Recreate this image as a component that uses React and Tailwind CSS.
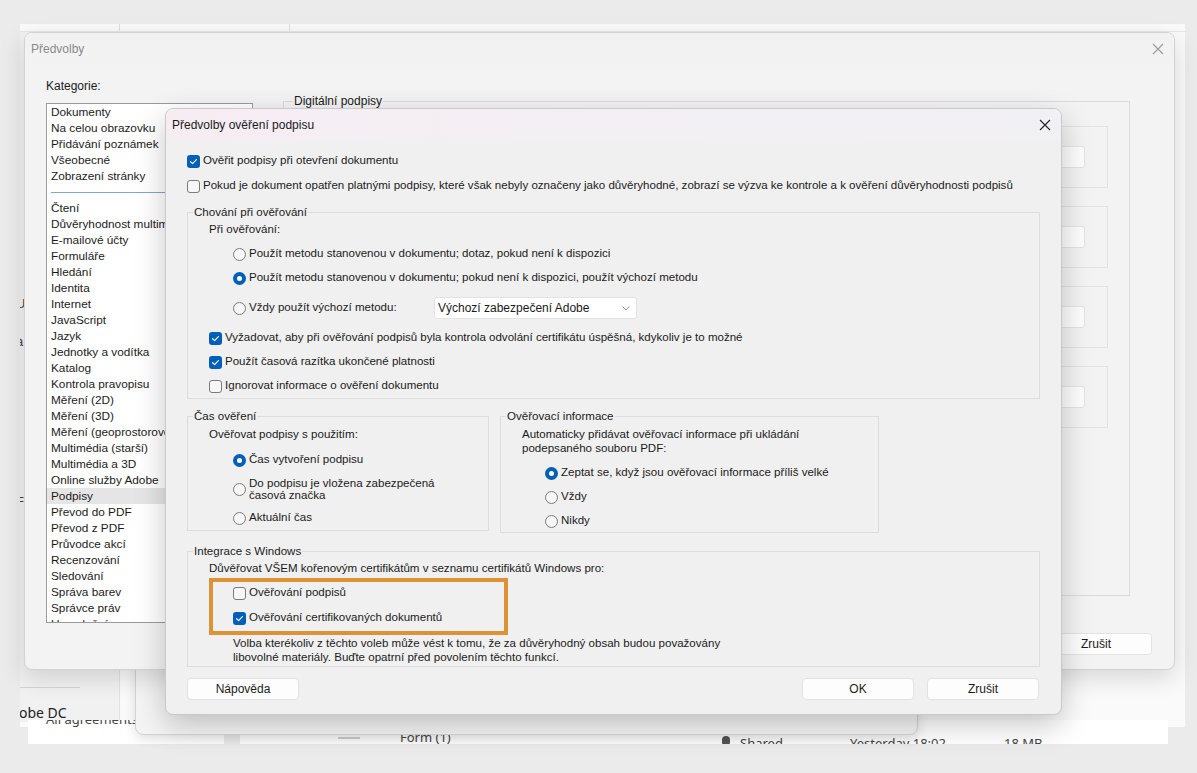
import React from "react";

const F = "font-['Liberation_Sans',Arial,sans-serif]";

function Check({ checked }) {
  return checked ? (
    <span className="w-[13px] h-[13px] rounded-[3px] bg-[#005fb8] flex items-center justify-center shrink-0">
      <svg width="9" height="9" viewBox="0 0 9 9">
        <path d="M1.6 4.7 L3.6 6.6 L7.4 2.6" fill="none" stroke="white" strokeWidth="1.2" strokeLinecap="round" strokeLinejoin="round" />
      </svg>
    </span>
  ) : (
    <span className="w-[13px] h-[13px] rounded-[3px] border border-[#7a7a7a] bg-[#f7f7f7] shrink-0" />
  );
}

function Radio({ checked }) {
  return checked ? (
    <span className="w-[13px] h-[13px] rounded-full bg-[#005fb8] flex items-center justify-center shrink-0">
      <span className="w-[5px] h-[5px] rounded-full bg-white" />
    </span>
  ) : (
    <span className="w-[13px] h-[13px] rounded-full border border-[#7a7a7a] bg-[#f7f7f7] shrink-0" />
  );
}

function CRow({ checked, children, className = "" }) {
  return (
    <div className={"h-[20px] flex items-center gap-[3px] " + className}>
      <Check checked={checked} />
      <span>{children}</span>
    </div>
  );
}

function RRow({ checked, children, className = "" }) {
  return (
    <div className={"h-[20px] flex items-center gap-[3px] " + className}>
      <Radio checked={checked} />
      <span>{children}</span>
    </div>
  );
}

function Group({ title, className = "", children }) {
  return (
    <div className={"relative border border-[#dcdcdc] " + className}>
      <span className="absolute -top-[8px] left-[5px] px-[1px] bg-[#f0f0f0] leading-[14px]">{title}</span>
      {children}
    </div>
  );
}

function Btn({ children, className = "" }) {
  return (
    <div className={"w-[112px] h-[22px] rounded-[4px] bg-[#fdfdfd] border border-[#e2e2e2] flex items-center justify-center " + className}>
      {children}
    </div>
  );
}

const categoriesTop = ["Dokumenty", "Na celou obrazovku", "Přidávání poznámek", "Všeobecné", "Zobrazení stránky"];
const categories = [
  "Čtení", "Důvěryhodnost multimédií", "E-mailové účty", "Formuláře", "Hledání", "Identita", "Internet",
  "JavaScript", "Jazyk", "Jednotky a vodítka", "Katalog", "Kontrola pravopisu", "Měření (2D)", "Měření (3D)",
  "Měření (geoprostorové)", "Multimédia (starší)", "Multimédia a 3D", "Online služby Adobe", "Podpisy",
  "Převod do PDF", "Převod z PDF", "Průvodce akcí", "Recenzování", "Sledování", "Správa barev", "Správce práv",
  "Usnadnění",
];

function XIcon({ color, size = 12 }) {
  return (
    <svg width={size} height={size} viewBox="0 0 12 12">
      <path d="M1 1 L11 11 M11 1 L1 11" stroke={color} strokeWidth="1.1" />
    </svg>
  );
}

export default function App() {
  return (
    <div className={"relative w-[1197px] h-[773px] overflow-hidden bg-[#ebebeb] text-[12px] text-[#1b1b1b] " + F}>
      {/* background app window */}
      <div className="absolute left-[20px] top-[24px] w-[1165px] h-[703px] bg-[#fafafa] overflow-hidden">
        <div className="h-[8px] flex border-b border-[#e6e6e6]">
          <div className="w-[100px] border-r border-[#e0e0e0]" />
          <div className="w-[170px] border-r border-[#e0e0e0]" />
        </div>
        <div className="absolute left-0 top-[8px] w-[100px] h-[690px] bg-[#f1f1f1] border-r border-[#e2e2e2]">
          <div className="absolute left-[-3px] top-[140px] text-[13px] text-[#444]">I</div>
          <div className="absolute left-[-4px] top-[262px] text-[13px] text-[#444]">U</div>
          <div className="absolute left-[-4px] top-[300px] text-[13px] text-[#444]">à</div>
          <div className="absolute left-[-4px] top-[460px] text-[13px] text-[#444]">F</div>
          <div className="absolute left-0 top-[655px] w-[60px] border-t border-[#d4d4d4]" />
          <div className="absolute left-[-1px] top-[673px] text-[14px] text-[#222] font-['Noto_Sans',sans-serif] leading-[16px]">obe DC</div>
        </div>
      </div>
      {/* bottom file row of app */}
      <div className="absolute left-[28px] top-[720px] w-[1140px] h-[24px] bg-white overflow-hidden text-[13px] text-[#444] font-['Noto_Sans',sans-serif]">
        <div className="absolute left-[18px] -top-[10px]">All agreements</div>
        <div className="absolute left-[196px] top-0 w-[16px] h-[25px] bg-[#ececec]" />
        <div className="absolute left-[310px] top-[12px] w-[22px] h-[2px] bg-[#d0d0d0]" />
        <div className="absolute left-[310px] top-[17px] w-[22px] h-[2px] bg-[#d0d0d0]" />
        <div className="absolute left-[372px] top-[8px]">Form (1)</div>
        <div className="absolute left-[694px] top-[16px] w-[8px] h-[10px] rounded-full bg-[#555]" />
        <div className="absolute left-[712px] top-[14px]">Shared</div>
        <div className="absolute left-[822px] top-[14px]">Yesterday 18:02</div>
        <div className="absolute left-[976px] top-[14px]">18 MB</div>
      </div>

      {/* ghost window behind dialog */}
      <div className="absolute left-[135px] top-[600px] w-[783px] h-[135px] rounded-b-[8px] bg-[#f4f4f4] border border-[#d3d3d3] shadow-[0_4px_12px_rgba(0,0,0,0.12)]" />

      {/* Předvolby window */}
      <div className="absolute left-[24px] top-[32px] w-[1151px] h-[638px] rounded-[8px] bg-[#f3f3f3] border border-[#d2d2d2] shadow-[0_8px_24px_rgba(0,0,0,0.14)] overflow-hidden flex flex-col">
        <div className="h-[32px] shrink-0 flex items-center justify-between pl-[6px] pr-[10px] bg-gradient-to-b from-[#f1f1f1] to-[#f3f3f3]">
          <span className="text-[#8a8a8a]">Předvolby</span>
          <XIcon color="#9a9a9a" />
        </div>
        <div className="flex-1 flex pl-[21px] pr-[44px]">
          <div className="w-[207px] flex flex-col">
            <div className="h-[16px] mt-[13px] flex items-center">Kategorie:</div>
            <div className="mt-[9px] h-[520px] border border-[#9a9a9a] bg-white overflow-hidden text-[11.8px]">
              {categoriesTop.map((c) => (
                <div key={c} className="h-[16px] leading-[16px] pl-[4px] whitespace-nowrap">{c}</div>
              ))}
              <div className="h-[16px] flex items-center pl-[4px]">
                <div className="w-full h-[1px] bg-[#7fa7c9]" />
              </div>
              {categories.map((c) => (
                <div key={c} className={"h-[16px] leading-[16px] pl-[4px] whitespace-nowrap " + (c === "Podpisy" ? "bg-[#e5e5e5]" : "")}>{c}</div>
              ))}
            </div>
          </div>
          <div className="flex-1 ml-[30px] flex flex-col">
            <div className="relative mt-[36px] h-[495px] border border-[#dcdcdc]">
              <span className="absolute -top-[8px] left-[9px] px-[1px] bg-[#f3f3f3] leading-[14px]">Digitální podpisy</span>
              {[0, 1, 2, 3].map((i) => (
                <div key={i} className={"ml-[20px] mr-[21px] h-[62px] border border-[#e2e2e2] flex items-center justify-end pr-[22px] " + (i === 0 ? "mt-[24px]" : "mt-[18px]")}>
                  <div className="w-[110px] h-[22px] rounded-[3px] bg-[#fdfdfd] border border-[#e4e4e4]" />
                </div>
              ))}
            </div>
            <div className="flex justify-end mt-[37px] mr-[-22px]">
              <Btn>Zrušit</Btn>
            </div>
          </div>
        </div>
      </div>

      {/* Dialog */}
      <div className="absolute left-[165px] top-[108px] w-[897px] h-[607px] rounded-[8px] bg-[#f0f0f0] border border-[#c9c9c9] shadow-[0_10px_30px_rgba(0,0,0,0.22)] overflow-hidden flex flex-col text-[11.55px]">
        <div className="h-[32px] shrink-0 flex items-center justify-between pl-[6px] pr-[10px] bg-gradient-to-r from-[#f6edf3] via-[#f3eff4] to-[#f1f0f4] text-[12px]">
          <span>Předvolby ověření podpisu</span>
          <XIcon color="#222" />
        </div>
        <div className="flex flex-col pl-[21px]">
          <CRow checked className="mt-[10px]">Ověřit podpisy při otevření dokumentu</CRow>
          <CRow className="mt-[5px]">Pokud je dokument opatřen platnými podpisy, které však nebyly označeny jako důvěryhodné, zobrazí se výzva ke kontrole a k ověření důvěryhodnosti podpisů</CRow>

          <Group title="Chování při ověřování" className="mt-[16px] w-[853px] h-[187px]">
            <div className="pl-[21px] flex flex-col">
              <div className="h-[16px] mt-[9px] flex items-center">Při ověřování:</div>
              <RRow className="mt-[6px] ml-[24px]">Použít metodu stanovenou v dokumentu; dotaz, pokud není k dispozici</RRow>
              <RRow checked className="mt-[4px] ml-[24px]">Použít metodu stanovenou v dokumentu; pokud není k dispozici, použít výchozí metodu</RRow>
              <div className="mt-[9px] ml-[24px] h-[22px] flex items-center">
                <div className="w-[201px] flex items-center gap-[3px]">
                  <Radio />
                  <span>Vždy použít výchozí metodu:</span>
                </div>
                <div className="w-[203px] h-[22px] rounded-[3px] bg-white border border-[#e3e3e3] flex items-center justify-between pl-[3px] pr-[6px]">
                  <span className="text-[12px]">Výchozí zabezpečení Adobe</span>
                  <svg width="8" height="5" viewBox="0 0 8 5"><path d="M0.5 0.5 L4 4 L7.5 0.5" fill="none" stroke="#888" strokeWidth="0.9" /></svg>
                </div>
              </div>
              <CRow checked className="mt-[9px]">Vyžadovat, aby při ověřování podpisů byla kontrola odvolání certifikátu úspěšná, kdykoliv je to možné</CRow>
              <CRow checked className="mt-[4px]">Použít časová razítka ukončené platnosti</CRow>
              <CRow className="mt-[4px]">Ignorovat informace o ověření dokumentu</CRow>
            </div>
          </Group>

          <div className="mt-[17px] flex gap-[11px]">
            <Group title="Čas ověření" className="w-[302px] h-[115px]">
              <div className="pl-[21px] flex flex-col">
                <div className="h-[16px] mt-[10px] flex items-center">Ověřovat podpisy s použitím:</div>
                <RRow checked className="mt-[7px] ml-[24px]">Čas vytvoření podpisu</RRow>
                <div className="mt-[6px] ml-[24px] h-[26px] flex items-center gap-[3px]">
                  <Radio />
                  <span className="leading-[12px]">Do podpisu je vložena zabezpečená<br />časová značka</span>
                </div>
                <RRow className="mt-[6px] ml-[24px]">Aktuální čas</RRow>
              </div>
            </Group>
            <Group title="Ověřovací informace" className="w-[379px] h-[117px]">
              <div className="pl-[21px] flex flex-col">
                <div className="mt-[10px] leading-[14px]">Automaticky přidávat ověřovací informace při ukládání<br />podepsaného souboru PDF:</div>
                <RRow checked className="mt-[8px] ml-[23px]">Zeptat se, když jsou ověřovací informace příliš velké</RRow>
                <RRow className="mt-[4px] ml-[23px]">Vždy</RRow>
                <RRow className="mt-[4px] ml-[23px]">Nikdy</RRow>
              </div>
            </Group>
          </div>

          <Group title="Integrace s Windows" className="mt-[18px] w-[853px] h-[116px]">
            <div className="pl-[21px] flex flex-col">
              <div className="h-[16px] mt-[9px] flex items-center">Důvěřovat VŠEM kořenovým certifikátům v seznamu certifikátů Windows pro:</div>
              <div className="mt-[1px] w-[299px] h-[57px] border-[4px] border-[#de9236] pl-[20px] pt-[1px] flex flex-col">
                <CRow>Ověřování podpisů</CRow>
                <CRow checked className="mt-[5px]">Ověřování certifikovaných dokumentů</CRow>
              </div>
              <div className="mt-[1px] ml-[24px] leading-[14px]">Volba kterékoliv z těchto voleb může vést k tomu, že za důvěryhodný obsah budou považovány<br />libovolné materiály. Buďte opatrní před povolením těchto funkcí.</div>
            </div>
          </Group>

          <div className="mt-[11px] w-[852px] flex items-center text-[12px]">
            <Btn>Nápověda</Btn>
            <div className="flex-1" />
            <Btn className="border-[#5c9dcc] bg-[#fbfbfb]">OK</Btn>
            <Btn className="ml-[13px]">Zrušit</Btn>
          </div>
        </div>
      </div>
    </div>
  );
}
